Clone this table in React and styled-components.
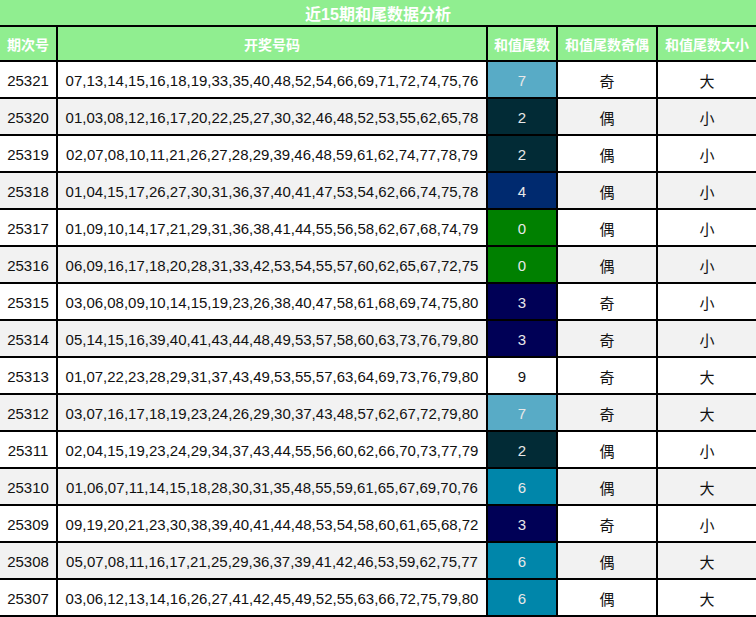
import React from 'react'
import styled, { createGlobalStyle } from 'styled-components'

const GlobalStyle = createGlobalStyle`
  html, body {
    margin: 0;
    padding: 0;
    background: #ffffff;
  }
  body {
    font-family: "Liberation Sans", "Noto Sans CJK SC", Arial, sans-serif;
  }
`

const rows = [
  { issue: '25321', nums: '07,13,14,15,16,18,19,33,35,40,48,52,54,66,69,71,72,74,75,76', tail: 7, odd: '奇', size: '大' },
  { issue: '25320', nums: '01,03,08,12,16,17,20,22,25,27,30,32,46,48,52,53,55,62,65,78', tail: 2, odd: '偶', size: '小' },
  { issue: '25319', nums: '02,07,08,10,11,21,26,27,28,29,39,46,48,59,61,62,74,77,78,79', tail: 2, odd: '偶', size: '小' },
  { issue: '25318', nums: '01,04,15,17,26,27,30,31,36,37,40,41,47,53,54,62,66,74,75,78', tail: 4, odd: '偶', size: '小' },
  { issue: '25317', nums: '01,09,10,14,17,21,29,31,36,38,41,44,55,56,58,62,67,68,74,79', tail: 0, odd: '偶', size: '小' },
  { issue: '25316', nums: '06,09,16,17,18,20,28,31,33,42,53,54,55,57,60,62,65,67,72,75', tail: 0, odd: '偶', size: '小' },
  { issue: '25315', nums: '03,06,08,09,10,14,15,19,23,26,38,40,47,58,61,68,69,74,75,80', tail: 3, odd: '奇', size: '小' },
  { issue: '25314', nums: '05,14,15,16,39,40,41,43,44,48,49,53,57,58,60,63,73,76,79,80', tail: 3, odd: '奇', size: '小' },
  { issue: '25313', nums: '01,07,22,23,28,29,31,37,43,49,53,55,57,63,64,69,73,76,79,80', tail: 9, odd: '奇', size: '大' },
  { issue: '25312', nums: '03,07,16,17,18,19,23,24,26,29,30,37,43,48,57,62,67,72,79,80', tail: 7, odd: '奇', size: '大' },
  { issue: '25311', nums: '02,04,15,19,23,24,29,34,37,43,44,55,56,60,62,66,70,73,77,79', tail: 2, odd: '偶', size: '小' },
  { issue: '25310', nums: '01,06,07,11,14,15,18,28,30,31,35,48,55,59,61,65,67,69,70,76', tail: 6, odd: '偶', size: '大' },
  { issue: '25309', nums: '09,19,20,21,23,30,38,39,40,41,44,48,53,54,58,60,61,65,68,72', tail: 3, odd: '奇', size: '小' },
  { issue: '25308', nums: '05,07,08,11,16,17,21,25,29,36,37,39,41,42,46,53,59,62,75,77', tail: 6, odd: '偶', size: '大' },
  { issue: '25307', nums: '03,06,12,13,14,16,26,27,41,42,45,49,52,55,63,66,72,75,79,80', tail: 6, odd: '偶', size: '大' },
]

const tailColors = {
  0: '#008000',
  2: '#022b36',
  3: '#000056',
  4: '#002a6f',
  6: '#0086aa',
  7: '#58abc6',
}

const Frame = styled.div`
  width: 756px;
  height: 617px;
  overflow: hidden;
`

const Table = styled.table`
  width: 756px;
  table-layout: fixed;
  border-collapse: separate;
  border-spacing: 0;
`

const Cell = styled.td`
  box-sizing: border-box;
  padding: 2px 0 0;
  height: 37px;
  border-right: 2px solid #000;
  border-bottom: 2px solid #000;
  text-align: center;
  vertical-align: middle;
  font-size: 15px;
  color: #111;
  white-space: nowrap;
  background: ${({ $bg }) => $bg};

  &:last-child {
    border-right: none;
  }
`

const TailCell = styled(Cell)`
  color: ${({ $light }) => ($light ? '#e8e8e8' : '#111')};
`

const HanCell = styled(Cell)`
  font-family: "Noto Sans CJK SC", sans-serif;
  font-size: 15px;
`

const TitleCell = styled.th`
  box-sizing: border-box;
  padding: 0;
  height: 27px;
  border-bottom: 2px solid #000;
  background: #90ee90;
  color: #fff;
  font-size: 16px;
  font-weight: 700;
  text-align: center;
  font-family: "Liberation Sans", "Noto Sans CJK SC", sans-serif;
`

const HeadCell = styled.th`
  box-sizing: border-box;
  padding: 0;
  height: 35px;
  border-right: 2px solid #000;
  border-bottom: 2px solid #000;
  background: #90ee90;
  color: #fff;
  font-size: 14px;
  font-weight: 700;
  text-align: center;
  white-space: nowrap;
  font-family: "Noto Sans CJK SC", sans-serif;

  &:last-child {
    border-right: none;
  }
`

export default function App() {
  return (
    <Frame>
      <GlobalStyle />
      <Table>
        <colgroup>
          <col style={{ width: 58 }} />
          <col style={{ width: 430 }} />
          <col style={{ width: 70 }} />
          <col style={{ width: 100 }} />
          <col style={{ width: 98 }} />
        </colgroup>
        <thead>
          <tr>
            <TitleCell colSpan={5}>近15期和尾数据分析</TitleCell>
          </tr>
          <tr>
            <HeadCell>期次号</HeadCell>
            <HeadCell>开奖号码</HeadCell>
            <HeadCell>和值尾数</HeadCell>
            <HeadCell>和值尾数奇偶</HeadCell>
            <HeadCell>和值尾数大小</HeadCell>
          </tr>
        </thead>
        <tbody>
          {rows.map((row, i) => {
            const bg = i % 2 === 1 ? '#f2f2f2' : '#ffffff'
            const tailBg = tailColors[row.tail]
            return (
              <tr key={row.issue}>
                <Cell $bg={bg}>{row.issue}</Cell>
                <Cell $bg={bg}>{row.nums}</Cell>
                <TailCell $bg={tailBg || bg} $light={!!tailBg}>{row.tail}</TailCell>
                <HanCell $bg={bg}>{row.odd}</HanCell>
                <HanCell $bg={bg}>{row.size}</HanCell>
              </tr>
            )
          })}
        </tbody>
      </Table>
    </Frame>
  )
}
